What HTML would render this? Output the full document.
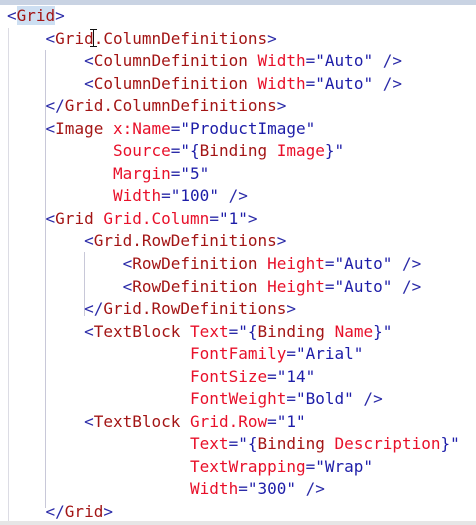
<!DOCTYPE html>
<html><head><style>
body{margin:0;width:476px;height:525px;background:#fff;overflow:hidden;position:relative;font-family:"DejaVu Sans Mono","Liberation Mono",monospace;}
.top{position:absolute;left:0;top:0;width:476px;height:5px;background:#c9d3e3}
.bot{position:absolute;left:0;bottom:0;width:476px;height:4px;background:#e6e6e6}
.vl{position:absolute;width:1px;background:#c8c8d8}
pre{position:absolute;left:7px;top:5px;margin:0;font-family:inherit;font-size:16px;line-height:22.55px;color:#2b2ba8;white-space:pre}
.n{color:#a31515}.a{color:#e8102a}.v{color:#1d1da8}
.sel{background:#cddff2}
</style></head><body>
<div class="top"></div>
<div class="vl" style="left:8px;top:28px;height:495px;background:#dcdce4"></div>
<div class="vl" style="left:45px;top:50px;height:458px"></div>
<div class="vl" style="left:84px;top:252px;height:64px"></div>
<pre>&lt;<span class="n sel">Grid</span>&gt;
    &lt;<span class="n">Grid.ColumnDefinitions</span>&gt;
        &lt;<span class="n">ColumnDefinition</span> <span class="a">Width</span>=<span class="v">"Auto"</span> /&gt;
        &lt;<span class="n">ColumnDefinition</span> <span class="a">Width</span>=<span class="v">"Auto"</span> /&gt;
    &lt;/<span class="n">Grid.ColumnDefinitions</span>&gt;
    &lt;<span class="n">Image</span> <span class="a">x:Name</span>=<span class="v">"ProductImage"</span>
           <span class="a">Source</span>=<span class="v">"{<span class="n">Binding</span> <span class="a">Image</span>}"</span>
           <span class="a">Margin</span>=<span class="v">"5"</span>
           <span class="a">Width</span>=<span class="v">"100"</span> /&gt;
    &lt;<span class="n">Grid</span> <span class="a">Grid.Column</span>=<span class="v">"1"</span>&gt;
        &lt;<span class="n">Grid.RowDefinitions</span>&gt;
            &lt;<span class="n">RowDefinition</span> <span class="a">Height</span>=<span class="v">"Auto"</span> /&gt;
            &lt;<span class="n">RowDefinition</span> <span class="a">Height</span>=<span class="v">"Auto"</span> /&gt;
        &lt;/<span class="n">Grid.RowDefinitions</span>&gt;
        &lt;<span class="n">TextBlock</span> <span class="a">Text</span>=<span class="v">"{<span class="n">Binding</span> <span class="a">Name</span>}"</span>
                   <span class="a">FontFamily</span>=<span class="v">"Arial"</span>
                   <span class="a">FontSize</span>=<span class="v">"14"</span>
                   <span class="a">FontWeight</span>=<span class="v">"Bold"</span> /&gt;
        &lt;<span class="n">TextBlock</span> <span class="a">Grid.Row</span>=<span class="v">"1"</span>
                   <span class="a">Text</span>=<span class="v">"{<span class="n">Binding</span> <span class="a">Description</span>}"</span>
                   <span class="a">TextWrapping</span>=<span class="v">"Wrap"</span>
                   <span class="a">Width</span>=<span class="v">"300"</span> /&gt;
    &lt;/<span class="n">Grid</span>&gt;</pre>
<div style="position:absolute;left:93px;top:29px;width:1px;height:18px;background:#111"></div>
<div style="position:absolute;left:90px;top:29px;width:7px;height:1px;background:#111"></div>
<div style="position:absolute;left:90px;top:46px;width:7px;height:1px;background:#111"></div>
<div class="bot"></div>
</body></html>
